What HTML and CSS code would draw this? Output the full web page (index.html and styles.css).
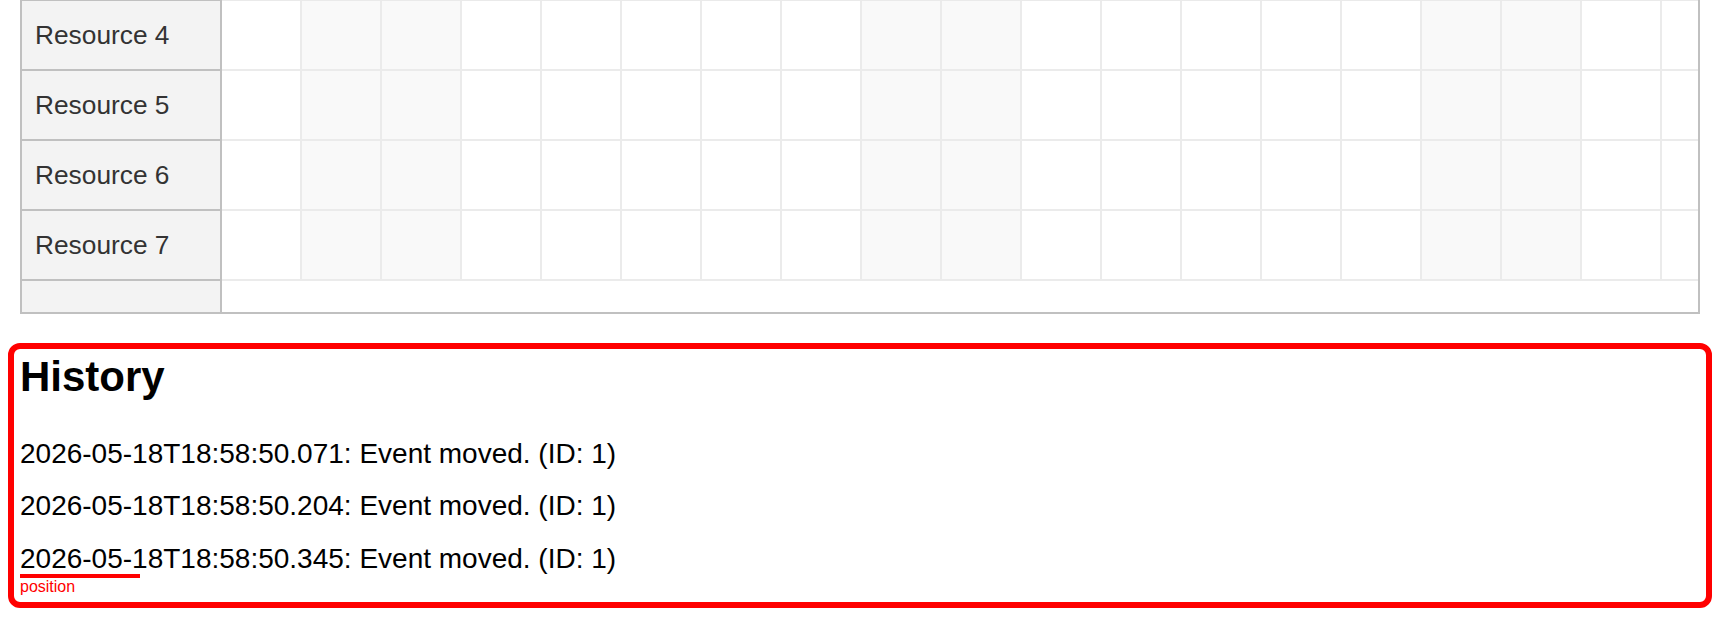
FILE: index.html
```html
<!DOCTYPE html>
<html lang="en">
<head>
<meta charset="utf-8">
<title>Scheduler history</title>
<link rel="stylesheet" href="styles.css">
</head>
<body>
<div class="scheduler">
  <div class="edge"><div class="edge-res"></div><div class="edge-grid"></div></div>
  <div class="row">
    <div class="res">Resource 4</div>
    <div class="cells">
      <div class="cell"></div><div class="cell wk"></div><div class="cell wk"></div><div class="cell"></div><div class="cell"></div><div class="cell"></div><div class="cell"></div><div class="cell"></div><div class="cell wk"></div><div class="cell wk"></div><div class="cell"></div><div class="cell"></div><div class="cell"></div><div class="cell"></div><div class="cell"></div><div class="cell wk"></div><div class="cell wk"></div><div class="cell"></div><div class="cell"></div>
    </div>
  </div>
  <div class="row">
    <div class="res">Resource 5</div>
    <div class="cells">
      <div class="cell"></div><div class="cell wk"></div><div class="cell wk"></div><div class="cell"></div><div class="cell"></div><div class="cell"></div><div class="cell"></div><div class="cell"></div><div class="cell wk"></div><div class="cell wk"></div><div class="cell"></div><div class="cell"></div><div class="cell"></div><div class="cell"></div><div class="cell"></div><div class="cell wk"></div><div class="cell wk"></div><div class="cell"></div><div class="cell"></div>
    </div>
  </div>
  <div class="row">
    <div class="res">Resource 6</div>
    <div class="cells">
      <div class="cell"></div><div class="cell wk"></div><div class="cell wk"></div><div class="cell"></div><div class="cell"></div><div class="cell"></div><div class="cell"></div><div class="cell"></div><div class="cell wk"></div><div class="cell wk"></div><div class="cell"></div><div class="cell"></div><div class="cell"></div><div class="cell"></div><div class="cell"></div><div class="cell wk"></div><div class="cell wk"></div><div class="cell"></div><div class="cell"></div>
    </div>
  </div>
  <div class="row">
    <div class="res">Resource 7</div>
    <div class="cells">
      <div class="cell"></div><div class="cell wk"></div><div class="cell wk"></div><div class="cell"></div><div class="cell"></div><div class="cell"></div><div class="cell"></div><div class="cell"></div><div class="cell wk"></div><div class="cell wk"></div><div class="cell"></div><div class="cell"></div><div class="cell"></div><div class="cell"></div><div class="cell"></div><div class="cell wk"></div><div class="cell wk"></div><div class="cell"></div><div class="cell"></div>
    </div>
  </div>
  <div class="row row-empty">
    <div class="res res-empty"></div>
    <div class="cells cells-empty"></div>
  </div>
</div>

<div class="history">
  <h1 class="history-title">History</h1>
  <div class="entry">2026-05-18T18:58:50.071: Event moved. (ID: 1)</div>
  <div class="entry">2026-05-18T18:58:50.204: Event moved. (ID: 1)</div>
  <div class="entry entry-marked">2026-05-18T18:58:50.345: Event moved. (ID: 1)
    <div class="marker"><span class="marker-label">position</span></div>
  </div>
</div>
</body>
</html>
```

FILE: styles.css
```css
* { box-sizing: border-box; }

html, body {
  background: #ffffff;
}

body {
  margin: 0 8px;
  font-family: "Liberation Sans", Arial, sans-serif;
  color: #000;
}

/* Scheduler */
.scheduler {
  margin: 0 12px;
  border-left: 2px solid #c0c0c0;
  border-right: 2px solid #c0c0c0;
  border-bottom: 2px solid #c0c0c0;
  overflow: hidden;
}

.edge {
  display: flex;
  height: 1px;
}
.edge-res {
  flex: 0 0 200px;
  background: #c0c0c0;
}
.edge-grid {
  flex: 1 1 auto;
  background: #eaeaea;
}

.row {
  display: flex;
  height: 70px;
}

.res {
  flex: 0 0 200px;
  background: #f3f3f3;
  border-right: 2px solid #c0c0c0;
  border-bottom: 2px solid #c0c0c0;
  color: #333333;
  font-size: 26.3px;
  padding-left: 13px;
  display: flex;
  align-items: center;
  white-space: nowrap;
}

.cells {
  flex: 1 1 auto;
  display: flex;
  overflow: hidden;
  min-width: 0;
}

.cell {
  flex: 0 0 80px;
  height: 70px;
  background: #ffffff;
  border-right: 2px solid #ebebeb;
  border-bottom: 2px solid #ebebeb;
}
.cell.wk {
  background: #f9f9f9;
}

.row-empty {
  height: 31px;
}
.res-empty {
  border-bottom: none;
}
.cells-empty {
  background: #ffffff;
}

/* History */
.history {
  margin-top: 29px;
  border: 6px solid #ff0000;
  border-radius: 12px;
  padding: 6px 6px 7px 6px;
}

.history-title {
  margin: 0 0 38.6px 0;
  font-size: 42px;
  line-height: 44px;
  font-weight: bold;
}

.entry {
  font-size: 28px;
  line-height: 32px;
  margin-bottom: 20.5px;
  white-space: nowrap;
}

.entry-marked {
  position: relative;
}

.marker {
  position: absolute;
  left: 0;
  top: 31.4px;
  width: 120px;
  border-top: 4px solid #ff0000;
}

.marker-label {
  display: block;
  color: #ff0000;
  font-size: 16px;
  line-height: 17px;
}
```
